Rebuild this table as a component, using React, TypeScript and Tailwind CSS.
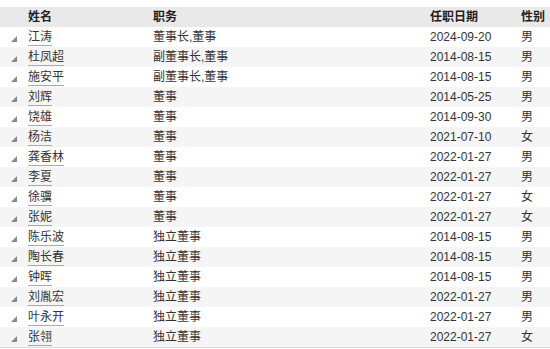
import React from 'react'

type Person = {
  name: string
  duty: string
  date: string
  gender: string
}

const people: Person[] = [
  { name: '江涛', duty: '董事长,董事', date: '2024-09-20', gender: '男' },
  { name: '杜凤超', duty: '副董事长,董事', date: '2014-08-15', gender: '男' },
  { name: '施安平', duty: '副董事长,董事', date: '2014-08-15', gender: '男' },
  { name: '刘辉', duty: '董事', date: '2014-05-25', gender: '男' },
  { name: '饶雄', duty: '董事', date: '2014-09-30', gender: '男' },
  { name: '杨洁', duty: '董事', date: '2021-07-10', gender: '女' },
  { name: '龚香林', duty: '董事', date: '2022-01-27', gender: '男' },
  { name: '李夏', duty: '董事', date: '2022-01-27', gender: '男' },
  { name: '徐骥', duty: '董事', date: '2022-01-27', gender: '女' },
  { name: '张妮', duty: '董事', date: '2022-01-27', gender: '女' },
  { name: '陈乐波', duty: '独立董事', date: '2014-08-15', gender: '男' },
  { name: '陶长春', duty: '独立董事', date: '2014-08-15', gender: '男' },
  { name: '钟晖', duty: '独立董事', date: '2014-08-15', gender: '男' },
  { name: '刘胤宏', duty: '独立董事', date: '2022-01-27', gender: '男' },
  { name: '叶永开', duty: '独立董事', date: '2022-01-27', gender: '男' },
  { name: '张翎', duty: '独立董事', date: '2022-01-27', gender: '女' },
]

const cols = 'grid grid-cols-[28px_125px_277px_91px_1fr] items-center h-[20px]'

const Arrow = () => (
  <svg width="6" height="6" viewBox="0 0 6 6" className="ml-[11px] mt-[3px]">
    <polygon points="6,0 6,6 0,6" fill="#8a8a8a" />
  </svg>
)

export default function App() {
  return (
    <div
      className="w-[550px] h-[349px] bg-white pt-[7px] text-[12px] text-[#333]"
      style={{ fontFamily: '"Liberation Sans", "Noto Sans CJK SC", sans-serif' }}
    >
      <div className={`${cols} bg-[#e9e9e9] font-bold text-[#222]`}>
        <span />
        <span>姓名</span>
        <span>职务</span>
        <span>任职日期</span>
        <span>性别</span>
      </div>
      {people.map((p, i) => (
        <div
          key={p.name}
          className={`${cols} ${i % 2 === 1 ? 'bg-[#f5f5f5]' : 'bg-white'}`}
        >
          <Arrow />
          <span>
            <span className="border-b border-[#aaa] pb-[1px]">{p.name}</span>
          </span>
          <span>{p.duty}</span>
          <span>{p.date}</span>
          <span>{p.gender}</span>
        </div>
      ))}
      <div className="border-t border-[#ddd]" />
    </div>
  )
}
